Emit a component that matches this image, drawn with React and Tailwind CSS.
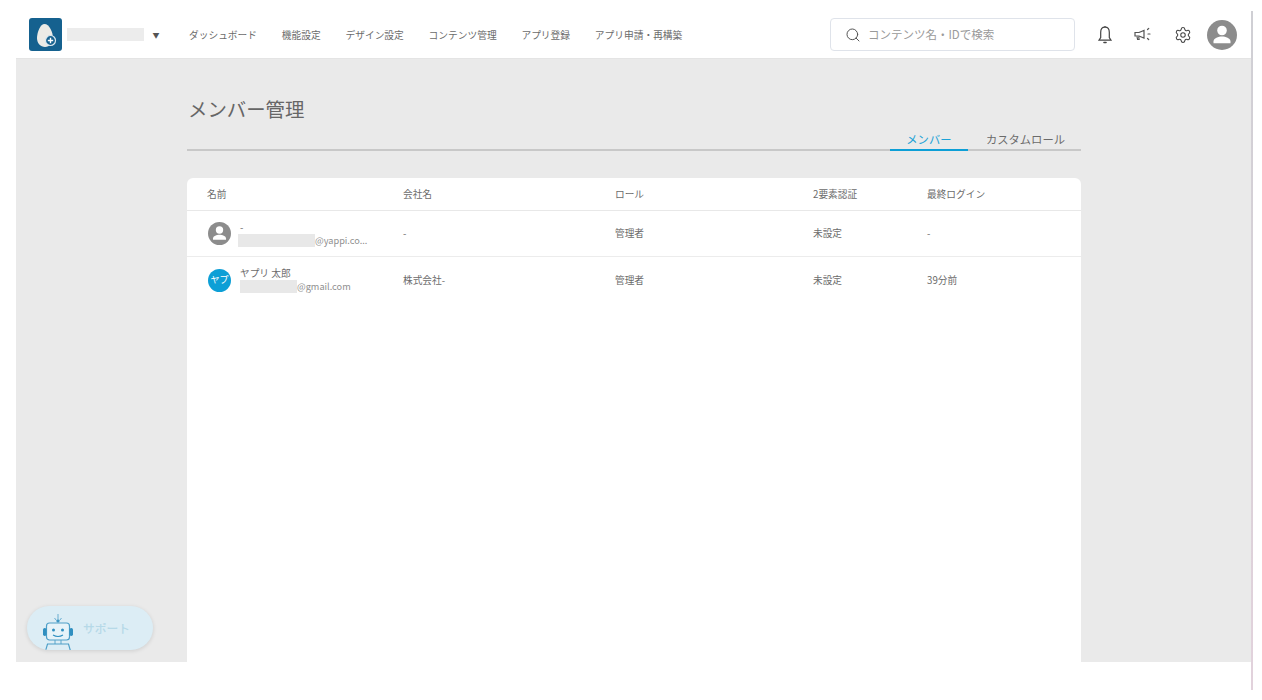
import React from "react";
import { Search, Settings } from "lucide-react";

const FONT = "font-['Noto_Sans_CJK_JP','Noto_Sans',sans-serif]";

function Egg() {
  return (
    <svg width="33" height="33" viewBox="0 0 33 33" className="block">
      <rect width="33" height="33" rx="3" fill="#15618f" />
      <path d="M15.500 6c-4 0-7.500 8-7.500 14 0 5.500 3.500 9 8 9 4.500 0 8-3.500 8-9C24 14 20 6 15.500 6z" fill="#ecebe6" />
      <circle cx="21.500" cy="22.500" r="5" fill="#15618f" stroke="#dce8ef" strokeWidth="1.200" />
      <path d="M18.800 22.500h5.400M21.500 19.800v5.400" fill="none" stroke="#fff" strokeWidth="1.400" />
    </svg>
  );
}

function Person({ size }) {
  return (
    <svg width={size} height={size} viewBox="0 0 30 30" className="block shrink-0">
      <circle cx="15" cy="15" r="15" fill="#8c8c8c" />
      <circle cx="15" cy="10.500" r="4.800" fill="#fff" />
      <path d="M6.500 21.500c0-3.500 5-5 8.500-5s8.500 1.500 8.500 5v1.800h-17z" fill="#fff" />
    </svg>
  );
}

function BellIcon() {
  return (
    <svg width="18" height="20" viewBox="0 0 18 20" fill="none" stroke="#444" strokeWidth="1.200" className="block">
      <path d="M9 2.200c-2.800 0-4.300 2.200-4.300 5v5.300L3 15.200h12l-1.700-2.700V7.200c0-2.800-1.500-5-4.300-5z" />
      <path d="M9 1v1.200" />
      <path d="M8 17.500h2" strokeWidth="1.600" strokeLinecap="round" />
    </svg>
  );
}

function Megaphone() {
  return (
    <svg width="20" height="18" viewBox="0 0 20 18" fill="none" stroke="#555" strokeWidth="1.200" className="block">
      <path d="M2 6.500h4L11 4.500v7.500l-5-2H2z" />
      <path d="M4 10.500l.6 3h1.500l-.4-3" />
      <path d="M14.500 3.500l1.200-1M15 8h2M14.500 12.500l1.200 1" strokeLinecap="round" />
    </svg>
  );
}

function Robot() {
  return (
    <svg width="34" height="38" viewBox="0 0 34 38" fill="none" className="block">
      <path d="M17 7V4M13.500 5l2 2.500M20.500 5l-2 2.500M17 4V1" stroke="#5ba6cc" strokeWidth="0.900" />
      <circle cx="17" cy="8" r="1.600" fill="#3f97c4" />
      <rect x="5.500" y="10" width="23" height="17" rx="3" fill="#e6f3f9" stroke="#4e9fc8" strokeWidth="1.200" />
      <rect x="2" y="15" width="3.500" height="8" rx="1.700" fill="#2f8fc0" />
      <rect x="28.500" y="15" width="3.500" height="8" rx="1.700" fill="#2f8fc0" />
      <circle cx="12.500" cy="17" r="1.500" fill="#2f8fc0" />
      <circle cx="21.500" cy="17" r="1.500" fill="#2f8fc0" />
      <path d="M12 22c3 1.800 7 1.800 10 0" stroke="#2f8fc0" strokeWidth="1.100" />
      <path d="M14 27v4M20 27v4" stroke="#5ba6cc" strokeWidth="1" />
      <path d="M4.500 38l2-7h21l2 7" stroke="#4e9fc8" strokeWidth="1.200" />
    </svg>
  );
}

const navItems = ["ダッシュボード", "機能設定", "デザイン設定", "コンテンツ管理", "アプリ登録", "アプリ申請・再構築"];

function Row({ avatar, name, blankClass, mail, company, login, border }) {
  return (
    <div className={`flex items-center h-[46px] text-[9.700px] text-[#6b6b6b] ${border ? "border-b border-[#ececec]" : ""}`}>
      <div className="w-[216px] pl-[21px] flex items-center shrink-0">
        {avatar}
        <div className="flex flex-col">
          <span className="leading-[13px] pl-[9px]">{name}</span>
          <span className="flex items-center leading-[13px] text-[9.200px]">
            <span className={`h-[13px] bg-[#e8e8e8] ${blankClass}`} />
            <span className="text-[#8f8f8f]">{mail}</span>
          </span>
        </div>
      </div>
      <span className="w-[212px] shrink-0">{company}</span>
      <span className="w-[198px] shrink-0">管理者</span>
      <span className="w-[114px] shrink-0">未設定</span>
      <span>{login}</span>
    </div>
  );
}

export default function App() {
  return (
    <div className={`relative w-[1262px] h-[700px] overflow-hidden bg-white flex ${FONT}`}>
      <div className="w-[16px] shrink-0" />
      <div className="w-[1235px] h-[662px] shrink-0 flex flex-col bg-[#eaeaea]">
        <header className="h-[59px] shrink-0 bg-white border-b border-[#e4e4e4] flex items-center pt-[11px]">
          <div className="ml-[13px]"><Egg /></div>
          <div className="ml-[5px] w-[77px] h-[13px] bg-[#ececec]" />
          <span className="text-[7px] text-[#555] w-[24px] text-center mt-[1px]">▼</span>
          <nav className="ml-[21px] mt-[1px] flex gap-[24.800px] text-[9.720px] text-[#6b6b6b]">
            {navItems.map((n) => <span key={n}>{n}</span>)}
          </nav>
          <div className="ml-auto w-[245px] h-[33px] rounded-[4px] border border-[#dfe3ea] flex items-center pl-[14px]">
            <Search size={16} strokeWidth={1.500} color="#555" />
            <span className="ml-[7px] mt-[1px] text-[11.500px] text-[#9a9a9a]">コンテンツ名・IDで検索</span>
          </div>
          <div className="ml-[21px] w-[18px] mt-[1px]"><BellIcon /></div>
          <div className="ml-[19px] w-[20px] mt-[1px]"><Megaphone /></div>
          <div className="ml-[21px] w-[18px] mt-[1px]"><Settings size={18} strokeWidth={1.400} color="#444" /></div>
          <div className="ml-[15px] mr-[14px] mt-[1px]"><Person size={30} /></div>
        </header>

        <main className="flex-1 min-h-0 ml-[171px] w-[894px] flex flex-col">
          <h1 className="mt-[36px] ml-[1px] text-[19.400px] leading-[28px] text-[#666] font-normal">メンバー管理</h1>
          <div className="mt-[7px] h-[21px] border-b-2 border-[#c8c8c8] flex justify-end pr-[16px] text-[11.300px] leading-[18px]">
            <span className="w-[78px] h-[21px] text-center text-[#1ca2d6] border-b-2 border-[#0d9fd6] mr-[18px]">メンバー</span>
            <span className="text-[#6b6b6b]">カスタムロール</span>
          </div>
          <section className="mt-[27px] flex-1 bg-white rounded-t-[6px] overflow-hidden">
            <div className="flex items-center h-[33px] pl-[20px] text-[9.700px] text-[#6b6b6b] border-b border-[#e8e8e8]">
              <span className="w-[196px]">名前</span>
              <span className="w-[212px]">会社名</span>
              <span className="w-[198px]">ロール</span>
              <span className="w-[114px]">2要素認証</span>
              <span>最終ログイン</span>
            </div>
            <Row border avatar={<Person size={23} />} name="-" blankClass="w-[77px] ml-[7px]" mail="@yappi.co..." company="-" login="-" />
            <Row avatar={<span className="w-[23px] h-[23px] rounded-full bg-[#0d9fd6] text-white text-[9px] flex items-center justify-center shrink-0">ヤプ</span>} name="ヤプリ 太郎" blankClass="w-[57px] ml-[9px]" mail="@gmail.com" company="株式会社-" login="39分前" />
          </section>
        </main>
      </div>
      <div className="w-[2px] h-[679px] mt-[11px] shrink-0 bg-linear-to-b from-[#cfcfd4] to-[#e2d2dc]" />

      <button className="absolute left-[27px] top-[606px] w-[126px] h-[44px] rounded-full bg-[#dcedf5] shadow-[0_1px_4px_rgba(0,0,0,0.12)] flex items-end overflow-hidden">
        <span className="ml-[14px] mb-[-1px]"><Robot /></span>
        <span className="ml-[8px] mb-[13px] text-[11.750px] leading-[18px] font-medium text-[#b6d9e8]">サポート</span>
      </button>
    </div>
  );
}
